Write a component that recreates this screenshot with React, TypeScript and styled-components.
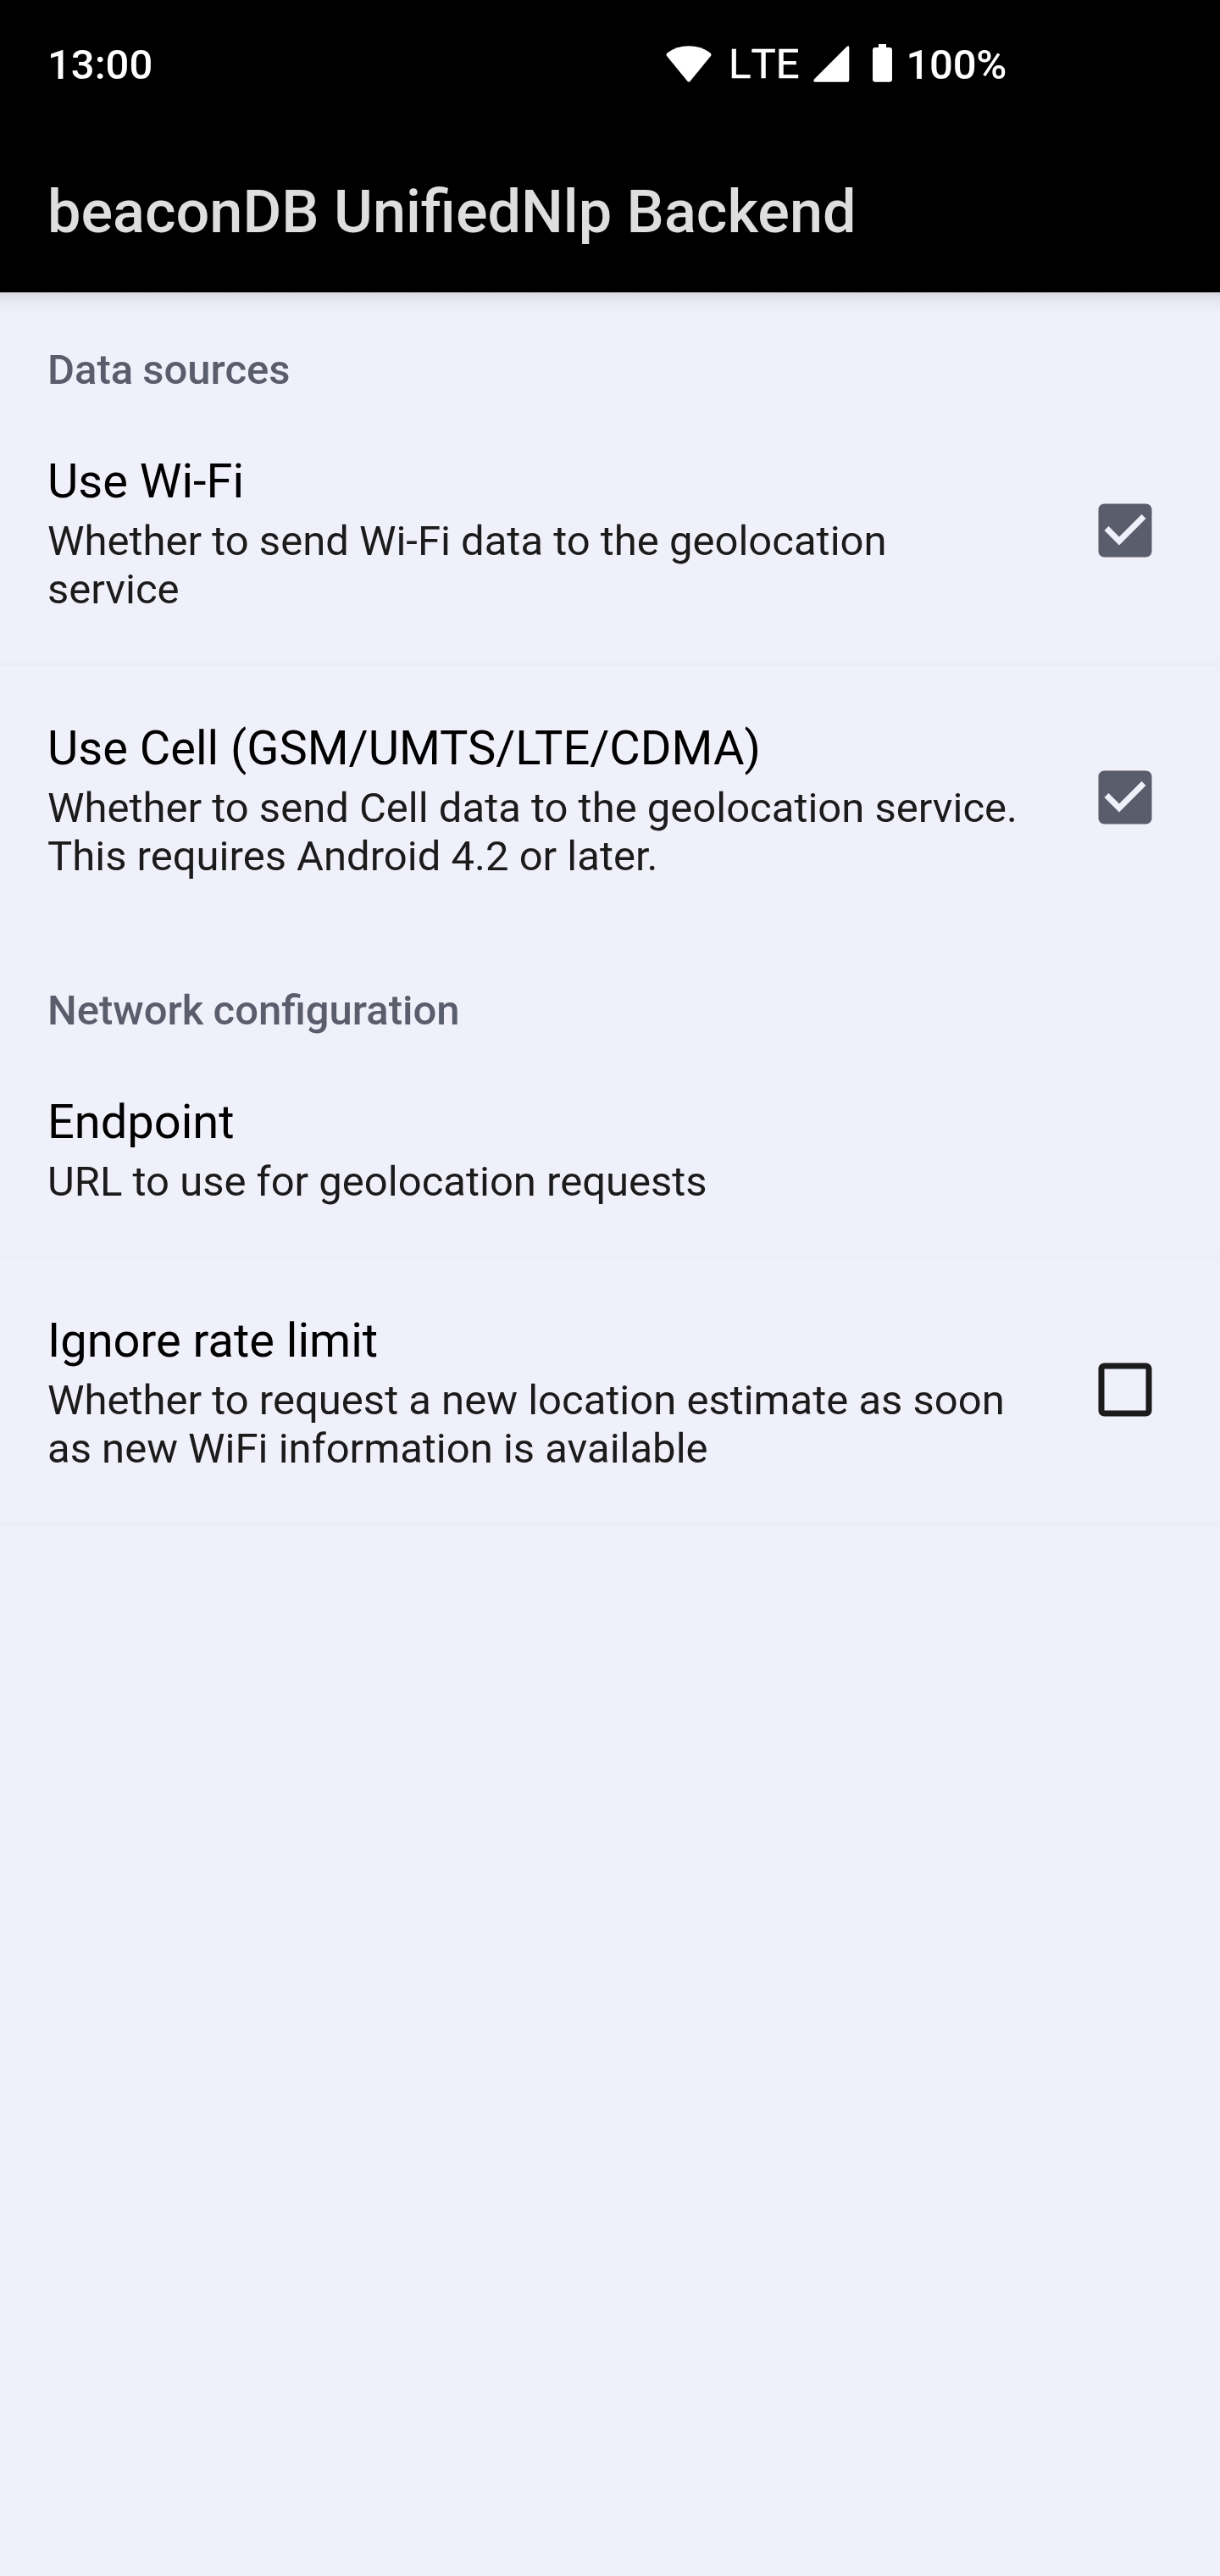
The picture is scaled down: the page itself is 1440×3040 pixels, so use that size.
import React, { useState } from "react";
import styled, { createGlobalStyle } from "styled-components";

const GlobalStyle = createGlobalStyle`
  body {
    margin: 0;
    background: #f0f0fa;
  }
`;

const Screen = styled.div`
  width: 1440px;
  height: 3040px;
  display: flex;
  flex-direction: column;
  overflow: hidden;
  background: #f0f0fa;
  font-family: Roboto, "Noto Sans", sans-serif;
`;

const StatusBar = styled.header`
  display: flex;
  align-items: flex-start;
  height: 145px;
  box-sizing: border-box;
  padding: 48px 252px 0 56px;
  background: #000;
  color: #fff;
  font-size: 49px;
  line-height: 57px;
  font-weight: 500;
`;

const Clock = styled.span`
  flex: 1;
`;

const NetworkType = styled.span`
  margin: -1px 16px 0 20px;
  font-weight: 400;
  font-kerning: none;
  -webkit-text-stroke: 0.5px #fff;
`;

const BatteryLevel = styled.span`
  margin-left: 17px;
  letter-spacing: -0.3px;
`;

const StatusIcon = styled.svg<{ $top: number; $right?: number }>`
  display: block;
  flex: none;
  fill: #fff;
  margin-top: ${(p) => p.$top}px;
  margin-right: ${(p) => p.$right ?? 0}px;
`;

const AppBar = styled.div`
  height: 200px;
  flex: none;
  box-sizing: border-box;
  padding: 64px 56px 0;
  background: #000;
`;

const AppTitle = styled.h1`
  margin: 0;
  color: #dedede;
  font-size: 70.2px;
  line-height: 82px;
  font-weight: 500;
`;

const Content = styled.main`
  flex: 1;
  background: linear-gradient(
    to bottom,
    #d7d7e1 0,
    #e0e0ea 5px,
    #e7e7f2 11px,
    #ececf7 18px,
    #f0f0fa 27px
  );
`;

const SectionTitle = styled.h2`
  margin: 0;
  height: 126px;
  box-sizing: border-box;
  padding: 63px 56px 0;
  color: #5a5d6b;
  font-size: 49px;
  line-height: 57px;
  font-weight: 500;
  word-spacing: -1px;
`;

const Row = styled.div<{ $divider: boolean }>`
  display: flex;
  align-items: center;
  box-sizing: border-box;
  padding: 64px 70px 58px 56px;
  border-bottom: 4px solid ${(p) => (p.$divider ? "#ededf7" : "transparent")};
`;

const RowText = styled.div`
  flex: 1;
`;

const RowTitle = styled.div`
  color: #000;
  font-size: 56px;
  line-height: 66px;
`;

const RowSummary = styled.div`
  margin-top: 9px;
  color: #1b1b1b;
  font-size: 49px;
  line-height: 57px;
  white-space: pre-line;
`;

const CheckButton = styled.button`
  flex: none;
  width: 84px;
  height: 84px;
  margin-top: -7px;
  padding: 0;
  border: 0;
  background: none;
`;

const CheckIcon = styled.svg<{ $checked: boolean }>`
  display: block;
  fill: ${(p) => (p.$checked ? "#5a5d6b" : "#1b1b1b")};
`;

const CHECKED =
  "M19 3H5c-1.11 0-2 .9-2 2v14c0 1.1.89 2 2 2h14c1.11 0 2-.9 2-2V5c0-1.1-.89-2-2-2zm-9 14l-5-5 1.41-1.41L10 14.17l7.59-7.59L19 8l-9 9z";
const UNCHECKED =
  "M19 5v14H5V5h14m0-2H5c-1.1 0-2 .9-2 2v14c0 1.1.9 2 2 2h14c1.1 0 2-.9 2-2V5c0-1.1-.9-2-2-2z";

interface PreferenceProps {
  title: string;
  summary: string;
  initial?: boolean;
  divider?: boolean;
}

function Preference({ title, summary, initial, divider = true }: PreferenceProps) {
  const [checked, setChecked] = useState(!!initial);
  return (
    <Row $divider={divider}>
      <RowText>
        <RowTitle>{title}</RowTitle>
        <RowSummary>{summary}</RowSummary>
      </RowText>
      {initial !== undefined && (
        <CheckButton
          role="checkbox"
          aria-checked={checked}
          onClick={() => setChecked(!checked)}
        >
          <CheckIcon $checked={checked} width="84" height="84" viewBox="0 0 24 24">
            <path d={checked ? CHECKED : UNCHECKED} />
          </CheckIcon>
        </CheckButton>
      )}
    </Row>
  );
}

export default function App() {
  return (
    <>
      <GlobalStyle />
      <Screen>
        <StatusBar>
          <Clock>13:00</Clock>
          <StatusIcon $top={6} width="54" height="43" viewBox="0 0 54 43">
            <path d="M25.3 41.8 1 12Q-.2 10 1.6 8.500Q12.500.3 27 .3T52.400 8.500Q54.200 10 53 12L28.700 41.800Q27 43.600 25.300 41.800Z" />
          </StatusIcon>
          <NetworkType>LTE</NetworkType>
          <StatusIcon $top={6} $right={27} width="43" height="43" viewBox="0 0 43 43">
            <path d="M39.500 1Q42.300-.8 42.300 2.200V40.500Q42.300 42.800 40 42.800H2.500Q-.8 42.800 1 39.500Z" />
          </StatusIcon>
          <StatusIcon $top={4} width="23" height="45" viewBox="0 0 23 45">
            <path d="M7 0H16V4H20Q23 4 23 7V41.700Q23 44.700 20 44.700H3Q0 44.700 0 41.700V7Q0 4 3 4H7Z" />
          </StatusIcon>
          <BatteryLevel>100%</BatteryLevel>
        </StatusBar>
        <AppBar>
          <AppTitle>beaconDB UnifiedNlp Backend</AppTitle>
        </AppBar>
        <Content>
          <SectionTitle>Data sources</SectionTitle>
          <Preference
            title="Use Wi-Fi"
            summary={"Whether to send Wi-Fi data to the geolocation\nservice"}
            initial={true}
          />
          <Preference
            title="Use Cell (GSM/UMTS/LTE/CDMA)"
            summary={
              "Whether to send Cell data to the geolocation service.\nThis requires Android 4.2 or later."
            }
            initial={true}
            divider={false}
          />
          <SectionTitle>Network configuration</SectionTitle>
          <Preference title="Endpoint" summary="URL to use for geolocation requests" />
          <Preference
            title="Ignore rate limit"
            summary={
              "Whether to request a new location estimate as soon\nas new WiFi information is available"
            }
            initial={false}
          />
        </Content>
      </Screen>
    </>
  );
}
